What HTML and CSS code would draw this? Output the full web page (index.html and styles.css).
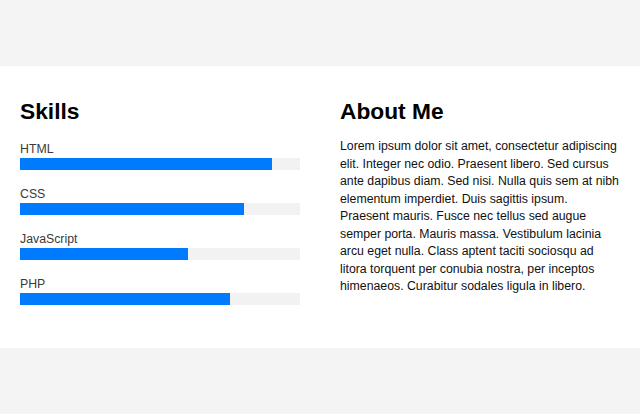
FILE: index.html
```html
<!DOCTYPE html>
<html lang="en">
<head>
<meta charset="utf-8">
<title>Skills and About</title>
<link rel="stylesheet" href="styles.css">
</head>
<body>
  <section class="card">
    <div class="col skills">
      <h2 class="title">Skills</h2>
      <div class="skill">
        <div class="skill-name">HTML</div>
        <div class="track"><div class="fill" style="width:90%"></div></div>
      </div>
      <div class="skill">
        <div class="skill-name">CSS</div>
        <div class="track"><div class="fill" style="width:80%"></div></div>
      </div>
      <div class="skill">
        <div class="skill-name">JavaScript</div>
        <div class="track"><div class="fill" style="width:60%"></div></div>
      </div>
      <div class="skill">
        <div class="skill-name">PHP</div>
        <div class="track"><div class="fill" style="width:75%"></div></div>
      </div>
    </div>
    <div class="col about">
      <h2 class="title">About Me</h2>
      <p class="about-text">Lorem ipsum dolor sit amet, consectetur adipiscing elit. Integer nec odio. Praesent libero. Sed cursus ante dapibus diam. Sed nisi. Nulla quis sem at nibh elementum imperdiet. Duis sagittis ipsum.<br>Praesent mauris. Fusce nec tellus sed augue semper porta. Mauris massa. Vestibulum lacinia arcu eget nulla. Class aptent taciti sociosqu ad litora torquent per conubia nostra, per inceptos himenaeos. Curabitur sodales ligula in libero.</p>
    </div>
  </section>
</body>
</html>
```
FILE: styles.css
```css
html, body {
  margin: 0;
  padding: 0;
}
body {
  background: #f4f4f4;
  font-family: "Liberation Sans", Arial, sans-serif;
  height: 100vh;
  display: flex;
  flex-direction: column;
  justify-content: center;
}
.card {
  background: #ffffff;
  display: grid;
  grid-template-columns: 1fr 1fr;
  column-gap: 40px;
  padding: 32px 20px 28px;
  height: 282px;
  box-sizing: border-box;
}
.title {
  margin: 0;
  font-size: 22.75px;
  line-height: 26px;
  font-weight: bold;
  color: #000;
}
.skills .title {
  margin-bottom: 16px;
}
.skill {
  margin-bottom: 15px;
}
.skill-name {
  font-size: 12.3px;
  line-height: 18px;
  color: #3a3a3a;
}
.track {
  height: 12px;
  background: #f2f2f2;
}
.fill {
  height: 100%;
  background: #007bff;
}
.about-text {
  margin: 14px 0 0;
  font-size: 12.3px;
  line-height: 17.5px;
  color: #111;
}
```
